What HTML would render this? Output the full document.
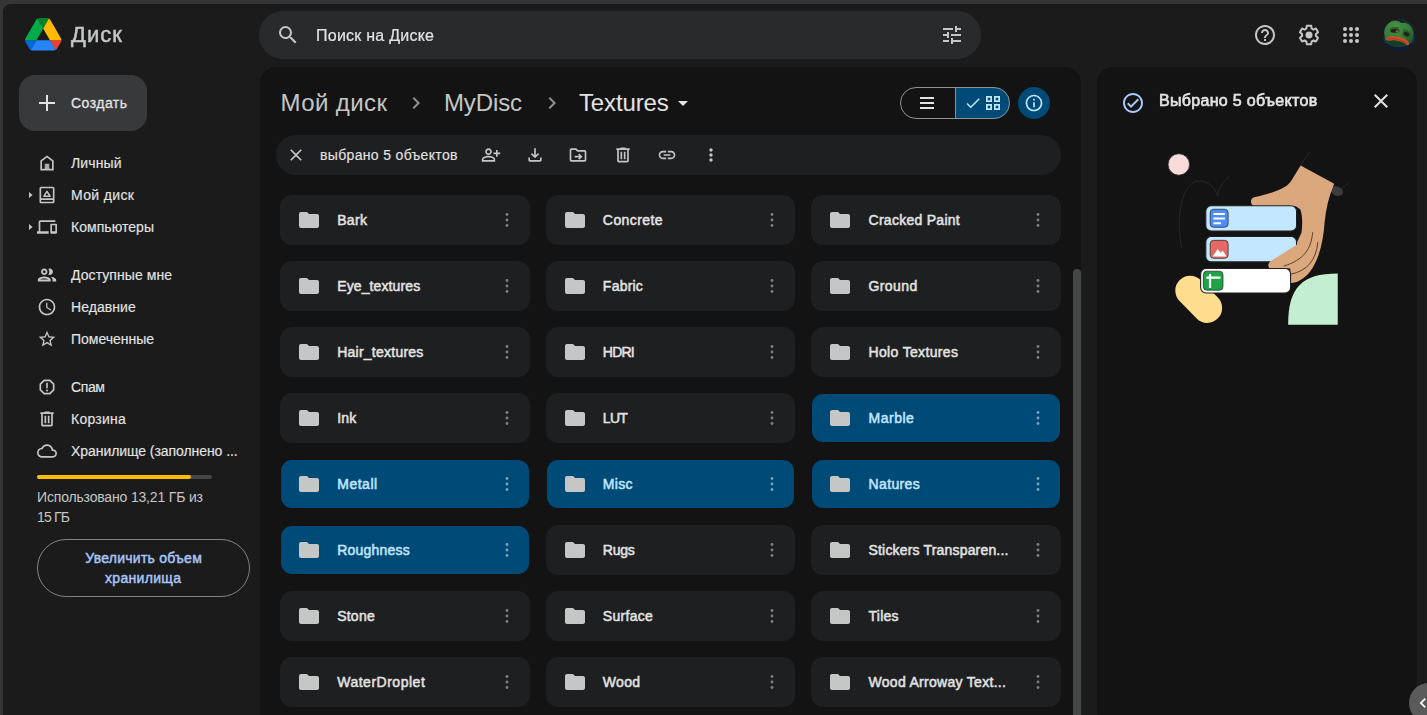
<!DOCTYPE html>
<html lang="ru">
<head>
<meta charset="utf-8">
<title>Textures – Google Диск</title>
<style>
*{box-sizing:border-box;margin:0;padding:0}
html,body{width:1427px;height:715px;overflow:hidden;background:#353535}
body{font-family:"Liberation Sans",sans-serif;color:#e3e3e3;position:relative}
#app{position:absolute;left:3px;top:4px;width:1424px;height:711px;background:#1b1b1b;border-top-left-radius:8px;overflow:hidden}
/* everything inside #root uses page coordinates */
#root{position:absolute;left:-3px;top:-4px;width:1427px;height:715px}
.abs{position:absolute}
.t{position:absolute;white-space:nowrap;line-height:1}
svg{position:absolute;display:block;overflow:visible}
.ic{fill:#c4c7c5}
/* panels */
#main{left:260px;top:67px;width:821px;height:660px;background:#131314;border-radius:16px}
#side{left:1097px;top:67px;width:320px;height:660px;background:#131314;border-radius:16px}
#search{left:259px;top:11px;width:722px;height:48px;border-radius:24px;background:#282a2c}
#create{left:19px;top:75px;width:128px;height:56px;border-radius:16px;background:#37393b}
#toolbar{left:276px;top:135px;width:785px;height:40px;border-radius:20px;background:#1e1f20}
.card{position:absolute;width:249.67px;height:50px;border-radius:12px;background:#1e1f20}
.card.sel{background:#004a77}
.card .nm{position:absolute;left:57px;top:18px;font-size:14px;line-height:1;white-space:nowrap;color:#e3e3e3;-webkit-text-stroke:0.35px #e3e3e3}
.card.sel .nm{color:#c2e7ff;-webkit-text-stroke:0.35px #c2e7ff}
.card svg.f{left:17px;top:13px;width:24px;height:24px;fill:#c4c7c5}
.card svg.m{left:217px;top:15px;width:20px;height:20px;fill:#8e918f}
.card.sel svg.m{fill:#a9c4d8}
.nav{font-size:14px;color:#e3e3e3;left:71px}
</style>
</head>
<body>
<div id="app"><div id="root">

<!-- ===== header ===== -->
<svg style="left:24.8px;top:18px" width="36.4" height="32.6" viewBox="0 0 87.3 78">
<path d="m6.600 66.850 3.850 6.650c.8 1.400 1.950 2.500 3.300 3.300l13.750-23.800h-27.500c0 1.550.4 3.100 1.200 4.500z" fill="#0066da"/>
<path d="m43.650 25-13.750-23.800c-1.350.8-2.500 1.900-3.300 3.300l-25.400 44a9.060 9.060 0 0 0 -1.200 4.500h27.500z" fill="#00ac47"/>
<path d="m73.550 76.800c1.350-.8 2.500-1.900 3.300-3.300l1.600-2.750 7.650-13.250c.8-1.400 1.200-2.950 1.200-4.500h-27.502l5.852 11.500z" fill="#ea4335"/>
<path d="m43.650 25 13.750-23.800c-1.350-.8-2.900-1.200-4.500-1.200h-18.500c-1.600 0-3.150.45-4.500 1.200z" fill="#00832d"/>
<path d="m59.800 53h-32.300l-13.750 23.800c1.350.8 2.900 1.200 4.500 1.200h50.800c1.600 0 3.150-.45 4.500-1.200z" fill="#2684fc"/>
<path d="m73.400 26.500-12.700-22c-.8-1.400-1.950-2.500-3.300-3.300l-13.750 23.800 16.150 28h27.450c0-1.550-.4-3.100-1.200-4.500z" fill="#ffba00"/>
</svg>
<div class="t" id="t_disk" style="left:71px;top:24.28px;font-size:22px;color:#c4c7c5;-webkit-text-stroke:0.5px #c4c7c5;letter-spacing:1.058px;will-change:transform;">Диск</div>
<div class="abs" id="search"></div>
<svg style="left:276px;top:23px" width="24" height="24" viewBox="0 0 24 24" fill="#c4c7c5"><path d="M15.5 14h-.79l-.28-.27A6.471 6.471 0 0 0 16 9.5 6.5 6.5 0 1 0 9.5 16c1.61 0 3.09-.59 4.23-1.57l.27.28v.79l5 4.99L20.49 19l-4.99-5zm-6 0C7.01 14 5 11.99 5 9.5S7.01 5 9.5 5 14 7.01 14 9.5 11.99 14 9.5 14z"/></svg>
<div class="t" id="t_search" style="left:316px;top:27.86px;font-size:16px;color:#e3e3e3;-webkit-text-stroke:0.2px #e3e3e3;letter-spacing:0.245px;will-change:transform;">Поиск на Диске</div>
<svg style="left:940px;top:23px" width="24" height="24" viewBox="0 0 24 24" fill="#c4c7c5"><path d="M3 17v2h6v-2H3zM3 5v2h10V5H3zm10 16v-2h8v-2h-8v-2h-2v6h2zM7 9v2H3v2h4v2h2V9H7zm14 4v-2H11v2h10zm-6-4h2V7h4V5h-4V3h-2v6z"/></svg>
<svg style="left:1253px;top:23px" width="24" height="24" viewBox="0 0 24 24" fill="#c4c7c5"><path d="M11 18h2v-2h-2v2zm1-16C6.48 2 2 6.48 2 12s4.48 10 10 10 10-4.48 10-10S17.52 2 12 2zm0 18c-4.41 0-8-3.59-8-8s3.59-8 8-8 8 3.59 8 8-3.59 8-8 8zm0-14c-2.21 0-4 1.79-4 4h2c0-1.1.9-2 2-2s2 .9 2 2c0 2-3 1.75-3 5h2c0-2.25 3-2.5 3-5 0-2.21-1.79-4-4-4z"/></svg>
<svg style="left:1297px;top:23px" width="24" height="24" viewBox="0 0 24 24" fill="#c4c7c5"><path d="M13.85 22.25h-3.7c-.74 0-1.36-.54-1.45-1.27l-.27-1.89c-.27-.14-.53-.29-.79-.46l-1.8.72c-.7.26-1.47-.03-1.81-.65L2.2 15.53c-.35-.66-.2-1.44.36-1.88l1.53-1.19c-.01-.15-.02-.3-.02-.46 0-.15.01-.31.02-.46l-1.52-1.19c-.59-.45-.74-1.26-.37-1.88l1.85-3.19c.34-.62 1.11-.9 1.79-.63l1.81.73c.26-.17.52-.32.78-.46l.27-1.91c.09-.7.71-1.25 1.44-1.25h3.7c.74 0 1.36.54 1.45 1.27l.27 1.89c.27.14.53.29.79.46l1.8-.72c.71-.26 1.48.03 1.82.65l1.84 3.18c.36.66.2 1.44-.36 1.88l-1.52 1.19c.01.15.02.3.02.46s-.01.31-.02.46l1.52 1.19c.56.45.72 1.23.37 1.86l-1.86 3.22c-.34.62-1.11.9-1.8.63l-1.8-.72c-.26.17-.52.32-.78.46l-.27 1.91c-.1.68-.72 1.22-1.46 1.22zm-3.23-2h2.76l.37-2.55.53-.22c.44-.18.88-.44 1.34-.78l.45-.34 2.38.96 1.38-2.4-2.03-1.58.07-.56c.03-.26.06-.51.06-.78s-.03-.53-.06-.78l-.07-.56 2.03-1.58-1.39-2.4-2.39.96-.45-.35c-.42-.32-.87-.58-1.33-.77l-.52-.22-.37-2.55h-2.76l-.37 2.55-.53.21c-.44.19-.88.44-1.34.79l-.45.33-2.38-.95-1.39 2.39 2.03 1.58-.07.56a7 7 0 0 0-.06.79c0 .26.02.53.06.78l.07.56-2.03 1.58 1.38 2.4 2.39-.96.45.35c.43.33.86.58 1.33.77l.53.22.38 2.55z"/><circle cx="12" cy="12" r="3.5"/></svg>
<svg style="left:1339px;top:23px" width="24" height="24" viewBox="0 0 24 24" fill="#c4c7c5"><circle cx="6" cy="6" r="2"/><circle cx="6" cy="12" r="2"/><circle cx="6" cy="18" r="2"/><circle cx="12" cy="6" r="2"/><circle cx="12" cy="12" r="2"/><circle cx="12" cy="18" r="2"/><circle cx="18" cy="6" r="2"/><circle cx="18" cy="12" r="2"/><circle cx="18" cy="18" r="2"/></svg>
<svg style="left:1382.900px;top:18.600px" width="32.200" height="32.200" viewBox="70 65 575 575">
<defs><clipPath id="av"><circle cx="357.500" cy="352.500" r="287.500"/></clipPath>
<filter id="avb" x="-10%" y="-10%" width="120%" height="120%"><feGaussianBlur stdDeviation="5.500"/></filter>
<radialGradient id="avg" cx="40%" cy="25%" r="75%"><stop offset="0" stop-color="#479141"/><stop offset=".6" stop-color="#387c38"/><stop offset="1" stop-color="#235229"/></radialGradient></defs>
<g clip-path="url(#av)"><g filter="url(#avb)">
<rect x="40" y="40" width="640" height="640" fill="#0b1c34"/>
<path d="M330 60h320v250C600 200 480 110 330 60z" fill="#15303a"/>
<path d="M70 380h600v120H70z" fill="#10305a"/>
<path d="M92 330C82 230 150 110 270 93c60-8 100 17 130 45 50-20 140 2 190 92 50 90 30 200-30 270-80 80-310 90-410 0-40-40-55-100-58-170Z" fill="url(#avg)"/>
<path d="M120 440c100-30 300-10 420 70-50 50-150 62-230 58-90-5-160-48-190-128Z" fill="#173c2a"/>
<ellipse cx="278" cy="272" rx="92" ry="50" fill="#2a5e2e"/>
<ellipse cx="490" cy="332" rx="80" ry="60" transform="rotate(22 490 332)" fill="#2a5e2e"/>
<ellipse cx="275" cy="275" rx="66" ry="30" fill="#1c2219"/>
<ellipse cx="318" cy="280" rx="26" ry="16" fill="#8d5f5c"/>
<ellipse cx="490" cy="338" rx="52" ry="34" transform="rotate(25 490 338)" fill="#1c2219"/>
<path d="M200 235c50-25 110-25 160-5M425 255c50 0 100 30 130 70" stroke="#23502a" stroke-width="14" fill="none"/>
<path d="M134 405c18-42 126-34 199-22 92 14 176 52 204 118-3 36-30 42-48 24-50-50-126-72-196-78-60-5-116 10-148 2-16-10-17-26-11-44Z" fill="#cc4f28"/>
<path d="M165 420c100-12 240 12 335 88" stroke="#742a16" stroke-width="9" fill="none"/>
</g></g></svg>


<!-- ===== sidebar ===== -->
<div class="abs" id="create"></div>
<svg style="left:35px;top:91px" width="24" height="24" viewBox="0 0 24 24" fill="#e3e3e3"><path d="M20 13h-7v7h-2v-7H4v-2h7V4h2v7h7v2z"/></svg>
<div class="t" id="t_create" style="left:71px;top:96.15px;font-size:14px;color:#e3e3e3;-webkit-text-stroke:0.3px #e3e3e3;letter-spacing:0.466px;">Создать</div>
<svg style="left:37px;top:153px" width="20" height="20" viewBox="0 0 24 24" fill="#c4c7c5"><path d="M12 3L4 9v12h16V9l-8-6zm6 16H6v-9l6-4.500 6 4.500v9z"/><path d="M9.300 13h5.400v6.500H9.300z" opacity=".85"/></svg>
<div class="t" id="n1" style="left:71px;top:156.15px;font-size:14px;color:#e3e3e3;-webkit-text-stroke:0.15px #e3e3e3;letter-spacing:0.134px;">Личный</div>
<svg style="left:37px;top:185px" width="20" height="20" viewBox="0 0 24 24" fill="#c4c7c5"><path d="M19 2H5c-1.100 0-2 .9-2 2v16c0 1.100.9 2 2 2h14c1.100 0 2-.9 2-2V4c0-1.100-.9-2-2-2zm0 2v12H5V4h14zM5 20v-2h14v2H5z"/><path d="M12 7.600l3.700 5.900H8.300z" fill="none" stroke="#c4c7c5" stroke-width="1.800" stroke-linejoin="round"/></svg>
<div class="t" id="n2" style="left:71px;top:188.15px;font-size:14px;color:#e3e3e3;-webkit-text-stroke:0.15px #e3e3e3;letter-spacing:0.366px;">Мой диск</div>
<svg style="left:37px;top:217px" width="20" height="20" viewBox="0 0 24 24" fill="#c4c7c5"><path d="M4 6h18V4H4c-1.1 0-2 .9-2 2v11H0v3h14v-3H4V6zm19 2h-6c-.55 0-1 .45-1 1v10c0 .55.45 1 1 1h6c.55 0 1-.45 1-1V9c0-.55-.45-1-1-1zm-1 9h-4v-7h4v7z"/></svg>
<div class="t" id="n3" style="left:71px;top:220.15px;font-size:14px;color:#e3e3e3;-webkit-text-stroke:0.15px #e3e3e3;letter-spacing:0.053px;">Компьютеры</div>
<svg style="left:36px;top:263.9px" width="22" height="22" viewBox="0 0 24 24" fill="#c4c7c5"><path d="M9 13.75c-2.34 0-7 1.17-7 3.5V19h14v-1.750c0-2.330-4.660-3.500-7-3.500zM4.340 17c.84-.58 2.870-1.250 4.660-1.250s3.820.67 4.660 1.250H4.340zM9 12c1.930 0 3.500-1.570 3.500-3.500S10.930 5 9 5 5.500 6.570 5.500 8.500 7.070 12 9 12zm0-5c.83 0 1.500.67 1.500 1.500S9.830 10 9 10s-1.500-.67-1.500-1.500S8.170 7 9 7zm7.040 6.810c1.160.84 1.960 1.960 1.960 3.440V19h4v-1.750c0-2.020-3.500-3.170-5.960-3.440zM15 12c1.930 0 3.500-1.570 3.500-3.500S16.930 5 15 5c-.54 0-1.040.13-1.500.35.63.89 1 1.980 1 3.150s-.37 2.260-1 3.150c.46.22.96.35 1.500.35z"/></svg>
<div class="t" id="n4" style="left:71px;top:268.15px;font-size:14px;color:#e3e3e3;-webkit-text-stroke:0.15px #e3e3e3;letter-spacing:0.067px;">Доступные мне</div>
<svg style="left:37px;top:297px" width="20" height="20" viewBox="0 0 24 24" fill="#c4c7c5"><path d="M11.99 2C6.47 2 2 6.48 2 12s4.47 10 9.99 10C17.52 22 22 17.52 22 12S17.520 2 11.990 2zM12 20c-4.420 0-8-3.580-8-8s3.580-8 8-8 8 3.580 8 8-3.580 8-8 8zm.5-13H11v6l5.250 3.150.75-1.230-4.500-2.670z"/></svg>
<div class="t" id="n5" style="left:71px;top:300.15px;font-size:14px;color:#e3e3e3;-webkit-text-stroke:0.15px #e3e3e3;letter-spacing:0.052px;">Недавние</div>
<svg style="left:37px;top:329px" width="20" height="20" viewBox="0 0 24 24" fill="#c4c7c5"><path d="M22 9.240l-7.190-.62L12 2 9.190 8.630 2 9.240l5.460 4.730L5.820 21 12 17.270 18.180 21l-1.630-7.030L22 9.240zM12 15.400l-3.760 2.270 1-4.280-3.320-2.880 4.380-.38L12 6.100l1.710 4.040 4.380.38-3.320 2.880 1 4.280L12 15.400z"/></svg>
<div class="t" id="n6" style="left:71px;top:332.15px;font-size:14px;color:#e3e3e3;-webkit-text-stroke:0.15px #e3e3e3;letter-spacing:-0.022px;">Помеченные</div>
<svg style="left:37px;top:377px" width="20" height="20" viewBox="0 0 24 24" fill="#c4c7c5"><path d="M8.600 4h6.800L20 8.600v6.800L15.400 20H8.600L4 15.400V8.600z" fill="none" stroke="#c4c7c5" stroke-width="2" stroke-linejoin="round"/><path d="M11 7h2v6.500h-2z"/><circle cx="12" cy="16.300" r="1.200"/></svg>
<div class="t" id="n7" style="left:71px;top:380.15px;font-size:14px;color:#e3e3e3;-webkit-text-stroke:0.15px #e3e3e3;letter-spacing:-0.368px;">Спам</div>
<svg style="left:37px;top:409px" width="20" height="20" viewBox="0 0 24 24" fill="#c4c7c5"><path d="M15 4V3H9v1H4v2h1v13c0 1.1.9 2 2 2h10c1.1 0 2-.9 2-2V6h1V4h-5zm2 15H7V6h10v13zM9 8h2v9H9zm4 0h2v9h-2z"/></svg>
<div class="t" id="n8" style="left:71px;top:412.15px;font-size:14px;color:#e3e3e3;-webkit-text-stroke:0.15px #e3e3e3;letter-spacing:0.244px;">Корзина</div>
<svg style="left:37px;top:441px" width="20" height="20" viewBox="0 0 24 24" fill="#c4c7c5"><path d="M12 6c2.620 0 4.880 1.860 5.390 4.430l.3 1.500 1.530.11c1.560.1 2.780 1.410 2.780 2.960 0 1.650-1.350 3-3 3H6c-2.210 0-4-1.790-4-4 0-2.050 1.530-3.760 3.560-3.970l1.070-.11.5-.95C8.080 7.140 9.940 6 12 6m0-2C9.110 4 6.600 5.640 5.350 8.040 2.340 8.360 0 10.910 0 14c0 3.310 2.690 6 6 6h13c2.760 0 5-2.240 5-5 0-2.640-2.050-4.780-4.650-4.960C18.670 6.590 15.640 4 12 4z"/></svg>
<div class="t" id="n9" style="left:71px;top:444.15px;font-size:14px;color:#e3e3e3;-webkit-text-stroke:0.15px #e3e3e3;letter-spacing:-0.064px;">Хранилище (заполнено ...</div>
<svg style="left:29.300px;top:192px" width="3.600" height="6" viewBox="0 0 3.600 6" fill="#c4c7c5"><path d="M0 0L3.600 3 0 6z"/></svg>
<svg style="left:29.300px;top:224px" width="3.600" height="6" viewBox="0 0 3.600 6" fill="#c4c7c5"><path d="M0 0L3.600 3 0 6z"/></svg>
<div class="abs" style="left:37px;top:475px;width:175px;height:4px;border-radius:2px;background:#444746"></div>
<div class="abs" style="left:37px;top:475px;width:154px;height:4px;border-radius:2px;background:#fbbc04"></div>
<div class="t" id="s1" style="left:37px;top:489.95px;font-size:14px;color:#c4c7c5;letter-spacing:-0.171px;">Использовано 13,21 ГБ из</div>
<div class="t" id="s2" style="left:37px;top:509.65px;font-size:14px;color:#c4c7c5;letter-spacing:-0.809px;">15 ГБ</div>
<div class="abs" style="left:37px;top:539px;width:213px;height:58px;border-radius:29px;border:1px solid #808381"></div>
<div class="t" id="b1" style="left:85.3px;top:550.75px;font-size:14px;color:#a8c7fa;-webkit-text-stroke:0.45px #a8c7fa;letter-spacing:0.256px;">Увеличить объем</div>
<div class="t" id="b2" style="left:105px;top:571.15px;font-size:14px;color:#a8c7fa;-webkit-text-stroke:0.45px #a8c7fa;letter-spacing:0.321px;">хранилища</div>


<!-- ===== main panel ===== -->
<div class="abs" id="main"></div>
<div class="t" id="bc1" style="left:280.5px;top:91.08px;font-size:24px;color:#c4c7c5;letter-spacing:0.416px;">Мой диск</div>
<svg style="left:404px;top:91px" width="24" height="24" viewBox="0 0 24 24" fill="#8e918f"><path d="M10 6L8.590 7.410 13.170 12l-4.580 4.590L10 18l6-6z"/></svg>
<div class="t" id="bc2" style="left:444px;top:91.08px;font-size:24px;color:#c4c7c5;letter-spacing:-0.131px;">MyDisc</div>
<svg style="left:540px;top:91px" width="24" height="24" viewBox="0 0 24 24" fill="#8e918f"><path d="M10 6L8.590 7.410 13.170 12l-4.580 4.590L10 18l6-6z"/></svg>
<div class="t" id="bc3" style="left:579px;top:91.08px;font-size:24px;color:#e3e3e3;letter-spacing:-0.145px;">Textures</div>
<svg style="left:671px;top:91px" width="24" height="24" viewBox="0 0 24 24" fill="#e3e3e3"><path d="M7 10l5 5 5-5z"/></svg>
<div class="abs" style="left:955px;top:87px;width:55px;height:32px;border-radius:0 16px 16px 0;background:#004a77"></div>
<div class="abs" style="left:900px;top:87px;width:110px;height:32px;border-radius:16px;border:1px solid #8e918f"></div>
<div class="abs" style="left:955px;top:88px;width:1px;height:30px;background:#8e918f"></div>
<svg style="left:920px;top:96px" width="14" height="14" viewBox="0 0 14 14" fill="#e3e3e3"><rect y="1" width="14" height="2"/><rect y="6" width="14" height="2"/><rect y="11" width="14" height="2"/></svg>
<svg style="left:963.5px;top:94px" width="18" height="18" viewBox="0 0 24 24" fill="#c2e7ff"><path d="M9 16.17L4.830 12l-1.420 1.410L9 19 21 7l-1.410-1.410z"/></svg>
<svg style="left:986px;top:96px" width="14" height="14" viewBox="0 0 14 14" fill="none" stroke="#c2e7ff" stroke-width="1.700"><rect x=".85" y=".85" width="4.300" height="4.300"/><rect x="8.850" y=".85" width="4.300" height="4.300"/><rect x=".85" y="8.850" width="4.300" height="4.300"/><rect x="8.850" y="8.850" width="4.300" height="4.300"/></svg>
<div class="abs" style="left:1018px;top:87px;width:32px;height:32px;border-radius:16px;background:#004a77"></div>
<svg style="left:1024px;top:93px" width="20" height="20" viewBox="0 0 24 24" fill="#c2e7ff"><path d="M11 7h2v2h-2zm0 4h2v6h-2zm1-9C6.480 2 2 6.480 2 12s4.480 10 10 10 10-4.480 10-10S17.520 2 12 2zm0 18c-4.410 0-8-3.590-8-8s3.590-8 8-8 8 3.590 8 8-3.590 8-8 8z"/></svg>
<div class="abs" id="toolbar"></div>
<svg style="left:286px;top:145px" width="20" height="20" viewBox="0 0 24 24" fill="#c4c7c5"><path d="M19 6.41L17.59 5 12 10.59 6.41 5 5 6.41 10.59 12 5 17.59 6.41 19 12 13.41 17.59 19 19 17.59 13.41 12z"/></svg>
<div class="t" id="tb" style="left:320px;top:148.15px;font-size:14px;color:#e3e3e3;-webkit-text-stroke:0.15px #e3e3e3;letter-spacing:0.334px;">выбрано 5 объектов</div>
<svg style="left:481px;top:145px" width="20" height="20" viewBox="0 0 24 24" fill="#c4c7c5"><path d="M20 9V6h-2v3h-3v2h3v3h2v-3h3V9h-3zM9 12c2.21 0 4-1.79 4-4s-1.79-4-4-4-4 1.79-4 4 1.79 4 4 4zm0-6c1.1 0 2 .9 2 2s-.9 2-2 2-2-.9-2-2 .9-2 2-2zm6.39 8.56C13.71 13.7 11.53 13 9 13s-4.71.7-6.39 1.56A2.97 2.97 0 0 0 1 17.22V20h16v-2.78c0-1.12-.61-2.15-1.61-2.66zM15 18H3v-.78c0-.38.2-.72.52-.88C4.71 15.73 6.63 15 9 15c2.37 0 4.29.73 5.48 1.34.32.16.52.5.52.88V18z"/></svg>
<svg style="left:525px;top:145px" width="20" height="20" viewBox="0 0 24 24" fill="#c4c7c5"><path d="M18 15v3H6v-3H4v3c0 1.1.9 2 2 2h12c1.1 0 2-.9 2-2v-3h-2zm-1-4l-1.41-1.41L13 12.17V4h-2v8.17L8.41 9.59 7 11l5 5 5-5z"/></svg>
<svg style="left:567.7px;top:145px" width="20" height="20" viewBox="0 0 24 24" fill="#c4c7c5"><path d="M20 6h-8l-2-2H4c-1.1 0-2 .9-2 2v12c0 1.1.9 2 2 2h16c1.1 0 2-.9 2-2V8c0-1.1-.9-2-2-2zm0 12H4V6h5.17l2 2H20v10zm-7.84-1.59L13.58 17.8 17.41 14l-3.83-3.83-1.41 1.41L13.58 13H8v2h5.58z"/></svg>
<svg style="left:613px;top:145px" width="20" height="20" viewBox="0 0 24 24" fill="#c4c7c5"><path d="M15 4V3H9v1H4v2h1v13c0 1.1.9 2 2 2h10c1.1 0 2-.9 2-2V6h1V4h-5zm2 15H7V6h10v13zM9 8h2v9H9zm4 0h2v9h-2z"/></svg>
<svg style="left:656.5px;top:145px" width="20" height="20" viewBox="0 0 24 24" fill="#c4c7c5"><path d="M3.9 12c0-1.71 1.39-3.1 3.1-3.1h4V7H7c-2.76 0-5 2.24-5 5s2.24 5 5 5h4v-1.9H7c-1.71 0-3.1-1.39-3.1-3.1zM8 13h8v-2H8v2zm9-6h-4v1.9h4c1.71 0 3.1 1.39 3.1 3.1s-1.39 3.1-3.1 3.1h-4V17h4c2.76 0 5-2.24 5-5s-2.24-5-5-5z"/></svg>
<svg style="left:701px;top:145px" width="20" height="20" viewBox="0 0 24 24" fill="#c4c7c5"><path d="M12 8c1.1 0 2-.9 2-2s-.9-2-2-2-2 .9-2 2 .9 2 2 2zm0 2c-1.1 0-2 .9-2 2s.9 2 2 2 2-.9 2-2-.9-2-2-2zm0 6c-1.1 0-2 .9-2 2s.9 2 2 2 2-.9 2-2-.9-2-2-2z"/></svg>
<div class="card" style="left:280px;top:195px"></div>
<svg style="left:297px;top:208px" width="24" height="24" viewBox="0 0 24 24" fill="#c4c7c5"><path d="M10 4H4c-1.1 0-1.99.9-1.99 2L2 18c0 1.1.9 2 2 2h16c1.1 0 2-.9 2-2V8c0-1.1-.9-2-2-2h-8l-2-2z"/></svg>
<svg style="left:504.5px;top:212px" width="4" height="16" viewBox="0 0 4 16" fill="#7f8180"><circle cx="2" cy="2.500" r="1.400"/><circle cx="2" cy="8" r="1.400"/><circle cx="2" cy="13.500" r="1.400"/></svg>
<div class="t" id="c00" style="left:337.2px;top:213.15px;font-size:14px;color:#e3e3e3;-webkit-text-stroke:0.5px #e3e3e3;letter-spacing:0.303px;">Bark</div>
<div class="card" style="left:545.67px;top:195px"></div>
<svg style="left:562.67px;top:208px" width="24" height="24" viewBox="0 0 24 24" fill="#c4c7c5"><path d="M10 4H4c-1.1 0-1.99.9-1.99 2L2 18c0 1.1.9 2 2 2h16c1.1 0 2-.9 2-2V8c0-1.1-.9-2-2-2h-8l-2-2z"/></svg>
<svg style="left:770.17px;top:212px" width="4" height="16" viewBox="0 0 4 16" fill="#7f8180"><circle cx="2" cy="2.500" r="1.400"/><circle cx="2" cy="8" r="1.400"/><circle cx="2" cy="13.500" r="1.400"/></svg>
<div class="t" id="c01" style="left:602.87px;top:213.15px;font-size:14px;color:#e3e3e3;-webkit-text-stroke:0.5px #e3e3e3;letter-spacing:0.411px;">Concrete</div>
<div class="card" style="left:811.33px;top:195px"></div>
<svg style="left:828.33px;top:208px" width="24" height="24" viewBox="0 0 24 24" fill="#c4c7c5"><path d="M10 4H4c-1.1 0-1.99.9-1.99 2L2 18c0 1.1.9 2 2 2h16c1.1 0 2-.9 2-2V8c0-1.1-.9-2-2-2h-8l-2-2z"/></svg>
<svg style="left:1035.83px;top:212px" width="4" height="16" viewBox="0 0 4 16" fill="#7f8180"><circle cx="2" cy="2.500" r="1.400"/><circle cx="2" cy="8" r="1.400"/><circle cx="2" cy="13.500" r="1.400"/></svg>
<div class="t" id="c02" style="left:868.5300000000001px;top:213.15px;font-size:14px;color:#e3e3e3;-webkit-text-stroke:0.5px #e3e3e3;letter-spacing:0.272px;">Cracked Paint</div>
<div class="card" style="left:280px;top:261px"></div>
<svg style="left:297px;top:274px" width="24" height="24" viewBox="0 0 24 24" fill="#c4c7c5"><path d="M10 4H4c-1.1 0-1.99.9-1.99 2L2 18c0 1.1.9 2 2 2h16c1.1 0 2-.9 2-2V8c0-1.1-.9-2-2-2h-8l-2-2z"/></svg>
<svg style="left:504.5px;top:278px" width="4" height="16" viewBox="0 0 4 16" fill="#7f8180"><circle cx="2" cy="2.500" r="1.400"/><circle cx="2" cy="8" r="1.400"/><circle cx="2" cy="13.500" r="1.400"/></svg>
<div class="t" id="c10" style="left:337.2px;top:279.15px;font-size:14px;color:#e3e3e3;-webkit-text-stroke:0.5px #e3e3e3;letter-spacing:0.116px;">Eye_textures</div>
<div class="card" style="left:545.67px;top:261px"></div>
<svg style="left:562.67px;top:274px" width="24" height="24" viewBox="0 0 24 24" fill="#c4c7c5"><path d="M10 4H4c-1.1 0-1.99.9-1.99 2L2 18c0 1.1.9 2 2 2h16c1.1 0 2-.9 2-2V8c0-1.1-.9-2-2-2h-8l-2-2z"/></svg>
<svg style="left:770.17px;top:278px" width="4" height="16" viewBox="0 0 4 16" fill="#7f8180"><circle cx="2" cy="2.500" r="1.400"/><circle cx="2" cy="8" r="1.400"/><circle cx="2" cy="13.500" r="1.400"/></svg>
<div class="t" id="c11" style="left:602.87px;top:279.15px;font-size:14px;color:#e3e3e3;-webkit-text-stroke:0.5px #e3e3e3;letter-spacing:0.219px;">Fabric</div>
<div class="card" style="left:811.33px;top:261px"></div>
<svg style="left:828.33px;top:274px" width="24" height="24" viewBox="0 0 24 24" fill="#c4c7c5"><path d="M10 4H4c-1.1 0-1.99.9-1.99 2L2 18c0 1.1.9 2 2 2h16c1.1 0 2-.9 2-2V8c0-1.1-.9-2-2-2h-8l-2-2z"/></svg>
<svg style="left:1035.83px;top:278px" width="4" height="16" viewBox="0 0 4 16" fill="#7f8180"><circle cx="2" cy="2.500" r="1.400"/><circle cx="2" cy="8" r="1.400"/><circle cx="2" cy="13.500" r="1.400"/></svg>
<div class="t" id="c12" style="left:868.5300000000001px;top:279.15px;font-size:14px;color:#e3e3e3;-webkit-text-stroke:0.5px #e3e3e3;letter-spacing:0.398px;">Ground</div>
<div class="card" style="left:280px;top:327px"></div>
<svg style="left:297px;top:340px" width="24" height="24" viewBox="0 0 24 24" fill="#c4c7c5"><path d="M10 4H4c-1.1 0-1.99.9-1.99 2L2 18c0 1.1.9 2 2 2h16c1.1 0 2-.9 2-2V8c0-1.1-.9-2-2-2h-8l-2-2z"/></svg>
<svg style="left:504.5px;top:344px" width="4" height="16" viewBox="0 0 4 16" fill="#7f8180"><circle cx="2" cy="2.500" r="1.400"/><circle cx="2" cy="8" r="1.400"/><circle cx="2" cy="13.500" r="1.400"/></svg>
<div class="t" id="c20" style="left:337.2px;top:345.15px;font-size:14px;color:#e3e3e3;-webkit-text-stroke:0.5px #e3e3e3;letter-spacing:0.244px;">Hair_textures</div>
<div class="card" style="left:545.67px;top:327px"></div>
<svg style="left:562.67px;top:340px" width="24" height="24" viewBox="0 0 24 24" fill="#c4c7c5"><path d="M10 4H4c-1.1 0-1.99.9-1.99 2L2 18c0 1.1.9 2 2 2h16c1.1 0 2-.9 2-2V8c0-1.1-.9-2-2-2h-8l-2-2z"/></svg>
<svg style="left:770.17px;top:344px" width="4" height="16" viewBox="0 0 4 16" fill="#7f8180"><circle cx="2" cy="2.500" r="1.400"/><circle cx="2" cy="8" r="1.400"/><circle cx="2" cy="13.500" r="1.400"/></svg>
<div class="t" id="c21" style="left:602.87px;top:345.15px;font-size:14px;color:#e3e3e3;-webkit-text-stroke:0.5px #e3e3e3;letter-spacing:-0.809px;">HDRI</div>
<div class="card" style="left:811.33px;top:327px"></div>
<svg style="left:828.33px;top:340px" width="24" height="24" viewBox="0 0 24 24" fill="#c4c7c5"><path d="M10 4H4c-1.1 0-1.99.9-1.99 2L2 18c0 1.1.9 2 2 2h16c1.1 0 2-.9 2-2V8c0-1.1-.9-2-2-2h-8l-2-2z"/></svg>
<svg style="left:1035.83px;top:344px" width="4" height="16" viewBox="0 0 4 16" fill="#7f8180"><circle cx="2" cy="2.500" r="1.400"/><circle cx="2" cy="8" r="1.400"/><circle cx="2" cy="13.500" r="1.400"/></svg>
<div class="t" id="c22" style="left:868.5300000000001px;top:345.15px;font-size:14px;color:#e3e3e3;-webkit-text-stroke:0.5px #e3e3e3;letter-spacing:0.338px;">Holo Textures</div>
<div class="card" style="left:280px;top:393px"></div>
<svg style="left:297px;top:406px" width="24" height="24" viewBox="0 0 24 24" fill="#c4c7c5"><path d="M10 4H4c-1.1 0-1.99.9-1.99 2L2 18c0 1.1.9 2 2 2h16c1.1 0 2-.9 2-2V8c0-1.1-.9-2-2-2h-8l-2-2z"/></svg>
<svg style="left:504.5px;top:410px" width="4" height="16" viewBox="0 0 4 16" fill="#7f8180"><circle cx="2" cy="2.500" r="1.400"/><circle cx="2" cy="8" r="1.400"/><circle cx="2" cy="13.500" r="1.400"/></svg>
<div class="t" id="c30" style="left:337.2px;top:411.15px;font-size:14px;color:#e3e3e3;-webkit-text-stroke:0.5px #e3e3e3;letter-spacing:0.156px;">Ink</div>
<div class="card" style="left:545.67px;top:393px"></div>
<svg style="left:562.67px;top:406px" width="24" height="24" viewBox="0 0 24 24" fill="#c4c7c5"><path d="M10 4H4c-1.1 0-1.99.9-1.99 2L2 18c0 1.1.9 2 2 2h16c1.1 0 2-.9 2-2V8c0-1.1-.9-2-2-2h-8l-2-2z"/></svg>
<svg style="left:770.17px;top:410px" width="4" height="16" viewBox="0 0 4 16" fill="#7f8180"><circle cx="2" cy="2.500" r="1.400"/><circle cx="2" cy="8" r="1.400"/><circle cx="2" cy="13.500" r="1.400"/></svg>
<div class="t" id="c31" style="left:602.87px;top:411.15px;font-size:14px;color:#e3e3e3;-webkit-text-stroke:0.5px #e3e3e3;letter-spacing:-0.729px;">LUT</div>
<div class="card sel" style="left:812.33px;top:394px;width:247.670px;height:48px;border-radius:11px"></div>
<svg style="left:828.33px;top:406px" width="24" height="24" viewBox="0 0 24 24" fill="#c4c7c5"><path d="M10 4H4c-1.1 0-1.99.9-1.99 2L2 18c0 1.1.9 2 2 2h16c1.1 0 2-.9 2-2V8c0-1.1-.9-2-2-2h-8l-2-2z"/></svg>
<svg style="left:1035.83px;top:410px" width="4" height="16" viewBox="0 0 4 16" fill="#7fa2bc"><circle cx="2" cy="2.500" r="1.400"/><circle cx="2" cy="8" r="1.400"/><circle cx="2" cy="13.500" r="1.400"/></svg>
<div class="t" id="c32" style="left:868.5300000000001px;top:411.15px;font-size:14px;color:#c2e7ff;-webkit-text-stroke:0.5px #c2e7ff;letter-spacing:0.519px;">Marble</div>
<div class="card sel" style="left:281px;top:460px;width:247.670px;height:48px;border-radius:11px"></div>
<svg style="left:297px;top:472px" width="24" height="24" viewBox="0 0 24 24" fill="#c4c7c5"><path d="M10 4H4c-1.1 0-1.99.9-1.99 2L2 18c0 1.1.9 2 2 2h16c1.1 0 2-.9 2-2V8c0-1.1-.9-2-2-2h-8l-2-2z"/></svg>
<svg style="left:504.5px;top:476px" width="4" height="16" viewBox="0 0 4 16" fill="#7fa2bc"><circle cx="2" cy="2.500" r="1.400"/><circle cx="2" cy="8" r="1.400"/><circle cx="2" cy="13.500" r="1.400"/></svg>
<div class="t" id="c40" style="left:337.2px;top:477.15px;font-size:14px;color:#c2e7ff;-webkit-text-stroke:0.5px #c2e7ff;letter-spacing:0.530px;">Metall</div>
<div class="card sel" style="left:546.67px;top:460px;width:247.670px;height:48px;border-radius:11px"></div>
<svg style="left:562.67px;top:472px" width="24" height="24" viewBox="0 0 24 24" fill="#c4c7c5"><path d="M10 4H4c-1.1 0-1.99.9-1.99 2L2 18c0 1.1.9 2 2 2h16c1.1 0 2-.9 2-2V8c0-1.1-.9-2-2-2h-8l-2-2z"/></svg>
<svg style="left:770.17px;top:476px" width="4" height="16" viewBox="0 0 4 16" fill="#7fa2bc"><circle cx="2" cy="2.500" r="1.400"/><circle cx="2" cy="8" r="1.400"/><circle cx="2" cy="13.500" r="1.400"/></svg>
<div class="t" id="c41" style="left:602.87px;top:477.15px;font-size:14px;color:#c2e7ff;-webkit-text-stroke:0.5px #c2e7ff;letter-spacing:0.305px;">Misc</div>
<div class="card sel" style="left:812.33px;top:460px;width:247.670px;height:48px;border-radius:11px"></div>
<svg style="left:828.33px;top:472px" width="24" height="24" viewBox="0 0 24 24" fill="#c4c7c5"><path d="M10 4H4c-1.1 0-1.99.9-1.99 2L2 18c0 1.1.9 2 2 2h16c1.1 0 2-.9 2-2V8c0-1.1-.9-2-2-2h-8l-2-2z"/></svg>
<svg style="left:1035.83px;top:476px" width="4" height="16" viewBox="0 0 4 16" fill="#7fa2bc"><circle cx="2" cy="2.500" r="1.400"/><circle cx="2" cy="8" r="1.400"/><circle cx="2" cy="13.500" r="1.400"/></svg>
<div class="t" id="c42" style="left:868.5300000000001px;top:477.15px;font-size:14px;color:#c2e7ff;-webkit-text-stroke:0.5px #c2e7ff;letter-spacing:0.361px;">Natures</div>
<div class="card sel" style="left:281px;top:526px;width:247.670px;height:48px;border-radius:11px"></div>
<svg style="left:297px;top:538px" width="24" height="24" viewBox="0 0 24 24" fill="#c4c7c5"><path d="M10 4H4c-1.1 0-1.99.9-1.99 2L2 18c0 1.1.9 2 2 2h16c1.1 0 2-.9 2-2V8c0-1.1-.9-2-2-2h-8l-2-2z"/></svg>
<svg style="left:504.5px;top:542px" width="4" height="16" viewBox="0 0 4 16" fill="#7fa2bc"><circle cx="2" cy="2.500" r="1.400"/><circle cx="2" cy="8" r="1.400"/><circle cx="2" cy="13.500" r="1.400"/></svg>
<div class="t" id="c50" style="left:337.2px;top:543.15px;font-size:14px;color:#c2e7ff;-webkit-text-stroke:0.5px #c2e7ff;letter-spacing:0.220px;">Roughness</div>
<div class="card" style="left:545.67px;top:525px"></div>
<svg style="left:562.67px;top:538px" width="24" height="24" viewBox="0 0 24 24" fill="#c4c7c5"><path d="M10 4H4c-1.1 0-1.99.9-1.99 2L2 18c0 1.1.9 2 2 2h16c1.1 0 2-.9 2-2V8c0-1.1-.9-2-2-2h-8l-2-2z"/></svg>
<svg style="left:770.17px;top:542px" width="4" height="16" viewBox="0 0 4 16" fill="#7f8180"><circle cx="2" cy="2.500" r="1.400"/><circle cx="2" cy="8" r="1.400"/><circle cx="2" cy="13.500" r="1.400"/></svg>
<div class="t" id="c51" style="left:602.87px;top:543.15px;font-size:14px;color:#e3e3e3;-webkit-text-stroke:0.5px #e3e3e3;letter-spacing:-0.296px;">Rugs</div>
<div class="card" style="left:811.33px;top:525px"></div>
<svg style="left:828.33px;top:538px" width="24" height="24" viewBox="0 0 24 24" fill="#c4c7c5"><path d="M10 4H4c-1.1 0-1.99.9-1.99 2L2 18c0 1.1.9 2 2 2h16c1.1 0 2-.9 2-2V8c0-1.1-.9-2-2-2h-8l-2-2z"/></svg>
<svg style="left:1035.83px;top:542px" width="4" height="16" viewBox="0 0 4 16" fill="#7f8180"><circle cx="2" cy="2.500" r="1.400"/><circle cx="2" cy="8" r="1.400"/><circle cx="2" cy="13.500" r="1.400"/></svg>
<div class="t" id="c52" style="left:868.5300000000001px;top:543.15px;font-size:14px;color:#e3e3e3;-webkit-text-stroke:0.5px #e3e3e3;letter-spacing:0.177px;">Stickers Transparen...</div>
<div class="card" style="left:280px;top:591px"></div>
<svg style="left:297px;top:604px" width="24" height="24" viewBox="0 0 24 24" fill="#c4c7c5"><path d="M10 4H4c-1.1 0-1.99.9-1.99 2L2 18c0 1.1.9 2 2 2h16c1.1 0 2-.9 2-2V8c0-1.1-.9-2-2-2h-8l-2-2z"/></svg>
<svg style="left:504.5px;top:608px" width="4" height="16" viewBox="0 0 4 16" fill="#7f8180"><circle cx="2" cy="2.500" r="1.400"/><circle cx="2" cy="8" r="1.400"/><circle cx="2" cy="13.500" r="1.400"/></svg>
<div class="t" id="c60" style="left:337.2px;top:609.15px;font-size:14px;color:#e3e3e3;-webkit-text-stroke:0.5px #e3e3e3;letter-spacing:0.226px;">Stone</div>
<div class="card" style="left:545.67px;top:591px"></div>
<svg style="left:562.67px;top:604px" width="24" height="24" viewBox="0 0 24 24" fill="#c4c7c5"><path d="M10 4H4c-1.1 0-1.99.9-1.99 2L2 18c0 1.1.9 2 2 2h16c1.1 0 2-.9 2-2V8c0-1.1-.9-2-2-2h-8l-2-2z"/></svg>
<svg style="left:770.17px;top:608px" width="4" height="16" viewBox="0 0 4 16" fill="#7f8180"><circle cx="2" cy="2.500" r="1.400"/><circle cx="2" cy="8" r="1.400"/><circle cx="2" cy="13.500" r="1.400"/></svg>
<div class="t" id="c61" style="left:602.87px;top:609.15px;font-size:14px;color:#e3e3e3;-webkit-text-stroke:0.5px #e3e3e3;letter-spacing:0.290px;">Surface</div>
<div class="card" style="left:811.33px;top:591px"></div>
<svg style="left:828.33px;top:604px" width="24" height="24" viewBox="0 0 24 24" fill="#c4c7c5"><path d="M10 4H4c-1.1 0-1.99.9-1.99 2L2 18c0 1.1.9 2 2 2h16c1.1 0 2-.9 2-2V8c0-1.1-.9-2-2-2h-8l-2-2z"/></svg>
<svg style="left:1035.83px;top:608px" width="4" height="16" viewBox="0 0 4 16" fill="#7f8180"><circle cx="2" cy="2.500" r="1.400"/><circle cx="2" cy="8" r="1.400"/><circle cx="2" cy="13.500" r="1.400"/></svg>
<div class="t" id="c62" style="left:868.5300000000001px;top:609.15px;font-size:14px;color:#e3e3e3;-webkit-text-stroke:0.5px #e3e3e3;letter-spacing:0.239px;">Tiles</div>
<div class="card" style="left:280px;top:657px"></div>
<svg style="left:297px;top:670px" width="24" height="24" viewBox="0 0 24 24" fill="#c4c7c5"><path d="M10 4H4c-1.1 0-1.99.9-1.99 2L2 18c0 1.1.9 2 2 2h16c1.1 0 2-.9 2-2V8c0-1.1-.9-2-2-2h-8l-2-2z"/></svg>
<svg style="left:504.5px;top:674px" width="4" height="16" viewBox="0 0 4 16" fill="#7f8180"><circle cx="2" cy="2.500" r="1.400"/><circle cx="2" cy="8" r="1.400"/><circle cx="2" cy="13.500" r="1.400"/></svg>
<div class="t" id="c70" style="left:337.2px;top:675.15px;font-size:14px;color:#e3e3e3;-webkit-text-stroke:0.5px #e3e3e3;letter-spacing:0.513px;">WaterDroplet</div>
<div class="card" style="left:545.67px;top:657px"></div>
<svg style="left:562.67px;top:670px" width="24" height="24" viewBox="0 0 24 24" fill="#c4c7c5"><path d="M10 4H4c-1.1 0-1.99.9-1.99 2L2 18c0 1.1.9 2 2 2h16c1.1 0 2-.9 2-2V8c0-1.1-.9-2-2-2h-8l-2-2z"/></svg>
<svg style="left:770.17px;top:674px" width="4" height="16" viewBox="0 0 4 16" fill="#7f8180"><circle cx="2" cy="2.500" r="1.400"/><circle cx="2" cy="8" r="1.400"/><circle cx="2" cy="13.500" r="1.400"/></svg>
<div class="t" id="c71" style="left:602.87px;top:675.15px;font-size:14px;color:#e3e3e3;-webkit-text-stroke:0.5px #e3e3e3;letter-spacing:0.290px;">Wood</div>
<div class="card" style="left:811.33px;top:657px"></div>
<svg style="left:828.33px;top:670px" width="24" height="24" viewBox="0 0 24 24" fill="#c4c7c5"><path d="M10 4H4c-1.1 0-1.99.9-1.99 2L2 18c0 1.1.9 2 2 2h16c1.1 0 2-.9 2-2V8c0-1.1-.9-2-2-2h-8l-2-2z"/></svg>
<svg style="left:1035.83px;top:674px" width="4" height="16" viewBox="0 0 4 16" fill="#7f8180"><circle cx="2" cy="2.500" r="1.400"/><circle cx="2" cy="8" r="1.400"/><circle cx="2" cy="13.500" r="1.400"/></svg>
<div class="t" id="c72" style="left:868.5300000000001px;top:675.15px;font-size:14px;color:#e3e3e3;-webkit-text-stroke:0.5px #e3e3e3;letter-spacing:0.297px;">Wood Arroway Text...</div>
<div class="abs" style="left:1073px;top:269px;width:8px;height:460px;border-radius:4px;background:#444746"></div>


<!-- ===== side panel ===== -->
<div class="abs" id="side"></div>
<svg style="left:1121px;top:91px" width="24" height="24" viewBox="0 0 24 24" fill="#a8c7fa"><path d="M12 2C6.480 2 2 6.480 2 12s4.480 10 10 10 10-4.480 10-10S17.520 2 12 2zm0 18c-4.410 0-8-3.590-8-8s3.590-8 8-8 8 3.590 8 8-3.590 8-8 8zm4.590-12.420L10 14.170l-2.590-2.580L6 13l4 4 8-8z"/></svg>
<div class="t" id="sp" style="left:1159.2px;top:93.26px;font-size:16px;color:#e3e3e3;-webkit-text-stroke:0.65px #e3e3e3;letter-spacing:0.316px;will-change:transform;">Выбрано 5 объектов</div>
<svg style="left:1369px;top:89px" width="24" height="24" viewBox="0 0 24 24" fill="#e3e3e3"><path d="M19 6.41L17.59 5 12 10.59 6.41 5 5 6.41 10.59 12 5 17.59 6.41 19 12 13.41 17.59 19 19 17.59 13.41 12z"/></svg>
<svg style="left:1160px;top:140px" width="190" height="195" viewBox="0 0 697 715">
<g fill="none" stroke="#2b2b2b" stroke-width="3" stroke-linecap="round">
<path d="M80 395C58 300 75 175 128 153c40-12 72 18 84 52 3-28 20-55 40-70"/>
<path d="M516 93l30-46"/><path d="M660 184l30-25"/>
</g>
<circle cx="69" cy="89.500" r="39.500" fill="#f9dcd9" stroke="#1f1f1f" stroke-width="3"/>
<path d="M110.600 552.400L173.300 616.200" stroke="#fedd8e" stroke-width="109" stroke-linecap="round"/>
<path d="M470 678C470 544 518 490 652 490V678Z" fill="#c4eed0"/>
<ellipse cx="649" cy="187" rx="23" ry="17" transform="rotate(20 649 187)" fill="#3d3d3d"/>
<path d="M516 93L639 160C620 205 609 250 604 300 599 372 585 436 550 483 530 508 505 523 478 525V470L400 468l10-28 88-55 21-45c4-30 4-60-4-85l-17-12H345c-15-8-15-28 0-33 45-9 85-22 112-38 18-10 28-27 38-45Z" fill="#dba87e"/>
<rect x="168" y="241" width="333" height="93" rx="20" fill="#c2e7ff" stroke="#1f1f1f" stroke-width="4"/>
<rect x="184" y="254" width="66" height="66" rx="13" fill="#4c8df6" stroke="#1f1f1f" stroke-width="2.500"/>
<path d="M196 271h42M196 288h42M196 305h28" stroke="#fff" stroke-width="7.500"/>
<rect x="168" y="354" width="333" height="93" rx="20" fill="#c2e7ff" stroke="#1f1f1f" stroke-width="4"/>
<rect x="184" y="368" width="66" height="66" rx="13" fill="#e46962" stroke="#1f1f1f" stroke-width="2.500"/>
<path d="M193 427l19-27 10 13 8-8 14 22Z" fill="#fff"/>
<path d="M503 383L408 443c-12 8-14 20-6 27h120l45-70-25-72Z" fill="#dba87e"/>
<g fill="none" stroke="#3a2a1e" stroke-width="3" stroke-linecap="round">
<path d="M560 340c-6 60-32 100-105 122"/><path d="M579 375c-6 65-38 105-99 117"/>
</g>
<rect x="149" y="471" width="330" height="90" rx="20" fill="#fff" stroke="#1f1f1f" stroke-width="4"/>
<rect x="159" y="481" width="72" height="70" rx="13" fill="#1ea446" stroke="#1f1f1f" stroke-width="2.500"/>
<path d="M183.500 491v52M170 505h52" stroke="#fff" stroke-width="8"/>
</svg>
<div class="abs" style="left:1409px;top:683px;width:40px;height:40px;border-radius:20px;background:#5a5a5a"></div>
<svg style="left:1413.2px;top:693px" width="20" height="20" viewBox="0 0 24 24" fill="#ffffff"><path d="M15.410 7.410L14 6l-6 6 6 6 1.410-1.410L10.830 12z"/></svg>


</div></div>
</body>
</html>
